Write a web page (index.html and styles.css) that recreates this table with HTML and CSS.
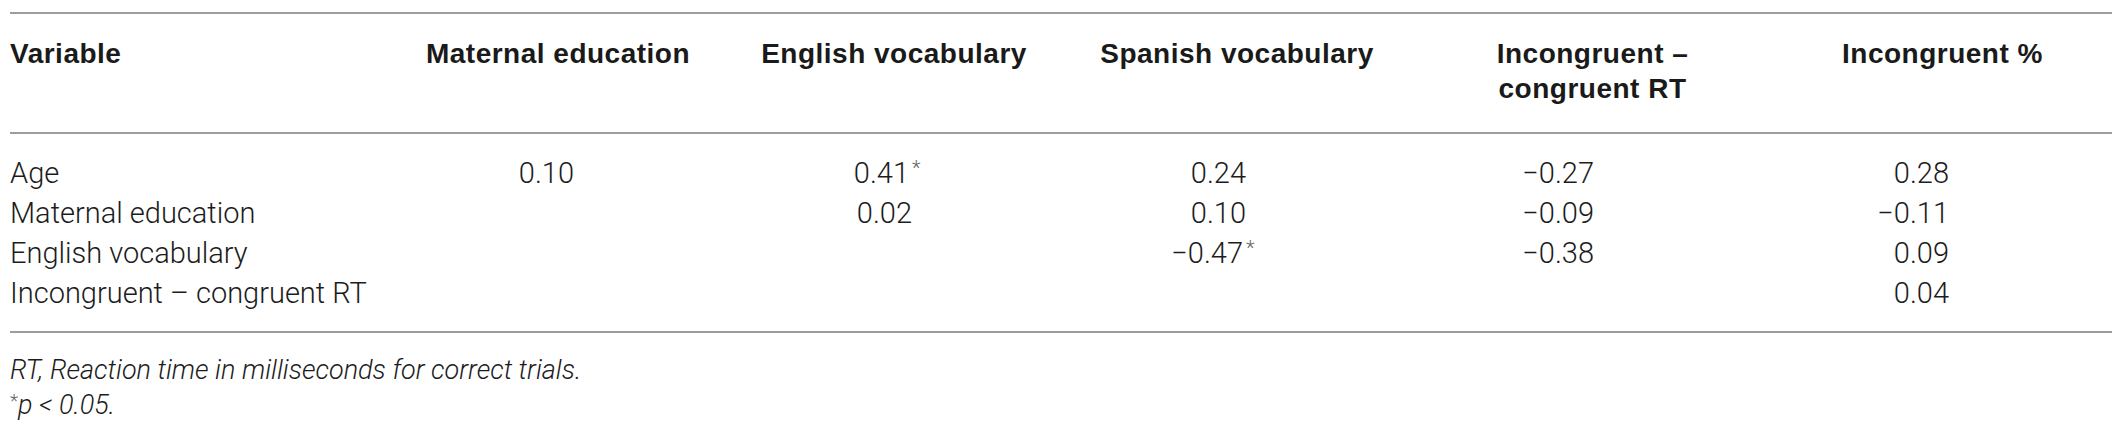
FILE: index.html
```html
<!DOCTYPE html>
<html lang="en">
<head>
<meta charset="utf-8">
<title>Correlations table</title>
<link rel="stylesheet" href="styles.css">
</head>
<body>
<div class="table">
  <div class="thead">
    <div class="th first">Variable</div>
    <div class="th">Maternal education</div>
    <div class="th">English vocabulary</div>
    <div class="th">Spanish vocabulary</div>
    <div class="th">Incongruent –<br>congruent RT</div>
    <div class="th">Incongruent %</div>
  </div>
  <div class="tbody">
    <div class="td first">Age</div>
    <div class="td n2">0.10</div>
    <div class="td n3">0.41<span class="sig">*</span></div>
    <div class="td n4">0.24</div>
    <div class="td n5">−0.27</div>
    <div class="td n6">0.28</div>

    <div class="td first">Maternal education</div>
    <div class="td n2"></div>
    <div class="td n3">0.02</div>
    <div class="td n4">0.10</div>
    <div class="td n5">−0.09</div>
    <div class="td n6">−0.11</div>

    <div class="td first">English vocabulary</div>
    <div class="td n2"></div>
    <div class="td n3"></div>
    <div class="td n4">−0.47<span class="sig">*</span></div>
    <div class="td n5">−0.38</div>
    <div class="td n6">0.09</div>

    <div class="td first">Incongruent – congruent RT</div>
    <div class="td n2"></div>
    <div class="td n3"></div>
    <div class="td n4"></div>
    <div class="td n5"></div>
    <div class="td n6">0.04</div>
  </div>
  <div class="notes">
    <p class="note">RT, Reaction time in milliseconds for correct trials.</p>
    <p class="note"><span class="sig-note">*</span>p &lt; 0.05.</p>
  </div>
</div>
</body>
</html>
```

FILE: styles.css
```css
html, body {
  margin: 0;
  padding: 0;
  background: #ffffff;
}

body {
  font-family: Roboto, "Liberation Sans", Arial, sans-serif;
  font-weight: 300;
  color: #1c1c1c;
}

.table {
  margin: 12px 11px 0 10px;
  border-top: 2px solid #9d9d9d;
}

.thead,
.tbody {
  display: grid;
  grid-template-columns: 380px 336px 336px 350px 361px 1fr;
}

.thead {
  padding: 22px 0 26px;
  border-bottom: 2px solid #9d9d9d;
  align-items: start;
}

.th {
  font-family: "Liberation Sans", Arial, sans-serif;
  font-weight: bold;
  font-size: 28px;
  line-height: 35px;
  letter-spacing: 0.5px;
  color: #1a1a1a;
  text-align: center;
}

.th.first {
  text-align: left;
}

.tbody {
  padding: 19px 0 18px;
  border-bottom: 2px solid #9d9d9d;
  grid-auto-rows: 40px;
}

.td {
  font-size: 29px;
  line-height: 40px;
  white-space: nowrap;
  text-align: right;
}

.td.first {
  text-align: left;
}

.n2 { padding-right: 152px; }
.n3 { padding-right: 150px; }
.n4 { padding-right: 166px; }
.n5 { padding-right: 179px; }
.n6 { padding-right: 163px; }

.sig {
  display: inline-block;
  width: 0;
  font-size: 20px;
  line-height: 1;
  vertical-align: 8px;
  color: #666;
  padding-left: 3px;
}

.notes {
  padding-top: 20px;
}

.note {
  margin: 0;
  font-style: italic;
  font-size: 27px;
  line-height: 35px;
}

.sig-note {
  font-style: normal;
  font-size: 19px;
  vertical-align: 7px;
  color: #666;
  line-height: 1;
}
```
